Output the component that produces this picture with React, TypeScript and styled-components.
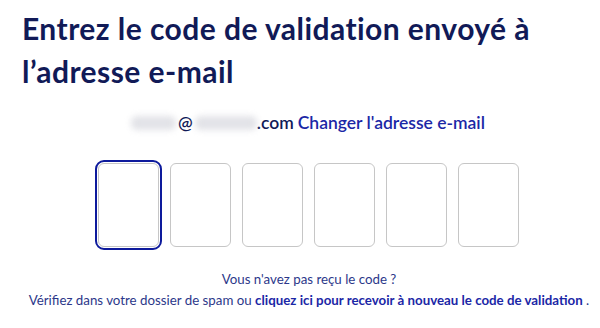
import React from 'react';
import styled, { createGlobalStyle } from 'styled-components';

const GlobalStyle = createGlobalStyle`
  html, body {
    margin: 0;
    padding: 0;
    background: #ffffff;
  }
  body {
    font-family: Lato, "Open Sans", "Liberation Sans", sans-serif;
  }
`;

const Page = styled.div`
  width: 600px;
  height: 328px;
  padding: 7px 0 0 22px;
  box-sizing: border-box;
  overflow: hidden;
`;

const Title = styled.h1`
  margin: 0;
  font-size: 30px;
  line-height: 43px;
  font-weight: 700;
  color: #111a57;
  letter-spacing: 0.45px;
`;

const Content = styled.div`
  display: flex;
  flex-direction: column;
  align-items: center;
  width: 570px;
`;

const EmailLine = styled.div`
  display: flex;
  align-items: center;
  margin-top: 19px;
  margin-left: 2px;
  font-size: 17.5px;
  line-height: 22px;
  font-weight: 600;
  color: #111a57;
  white-space: nowrap;
`;

const Blurred = styled.span<{ $w: number }>`
  display: inline-block;
  width: ${(p) => p.$w}px;
  height: 14px;
  border-radius: 6px;
  background: #cfd0d8;
  filter: blur(3px);
  opacity: 0.6;
`;

const At = styled.span`
  margin: 0 2px;
  color: #111a57;
`;

const ChangeLink = styled.a`
  margin-left: 4px;
  color: #1b27a6;
  text-decoration: none;
  cursor: pointer;
`;

const CodeRow = styled.div`
  display: flex;
  gap: 11px;
  margin-top: 29px;
  margin-left: 3px;
`;

const CodeBox = styled.input<{ $focused?: boolean }>`
  width: 61px;
  height: 84px;
  box-sizing: border-box;
  border: 1.5px solid #c6c6c6;
  border-radius: 6px;
  background: #fff;
  font-size: 28px;
  text-align: center;
  outline: ${(p) => (p.$focused ? '2.5px solid #0d1a9c' : 'none')};
  outline-offset: 1px;
`;

const Help = styled.div`
  margin-top: 22px;
  margin-left: 4px;
  text-align: center;
  font-size: 13.3px;
  line-height: 21px;
  color: #2c388a;
  white-space: nowrap;
`;

const HelpLink = styled.a`
  color: #1b27a6;
  font-weight: 700;
  text-decoration: none;
  cursor: pointer;
`;

export default function App() {
  return (
    <>
      <GlobalStyle />
      <Page>
        <Title>
          Entrez le code de validation envoyé à
          <br />
          l’adresse e-mail
        </Title>
        <Content>
          <EmailLine>
            <Blurred $w={45} />
            <At>@</At>
            <Blurred $w={62} />
            <span>.com</span>
            <ChangeLink>Changer l'adresse e-mail</ChangeLink>
          </EmailLine>
          <CodeRow>
            {[0, 1, 2, 3, 4, 5].map((i) => (
              <CodeBox key={i} $focused={i === 0} maxLength={1} readOnly />
            ))}
          </CodeRow>
          <Help>
            Vous n'avez pas reçu le code ?
            <br />
            Vérifiez dans votre dossier de spam ou{' '}
            <HelpLink>cliquez ici pour recevoir à nouveau le code de validation</HelpLink> .
          </Help>
        </Content>
      </Page>
    </>
  );
}
